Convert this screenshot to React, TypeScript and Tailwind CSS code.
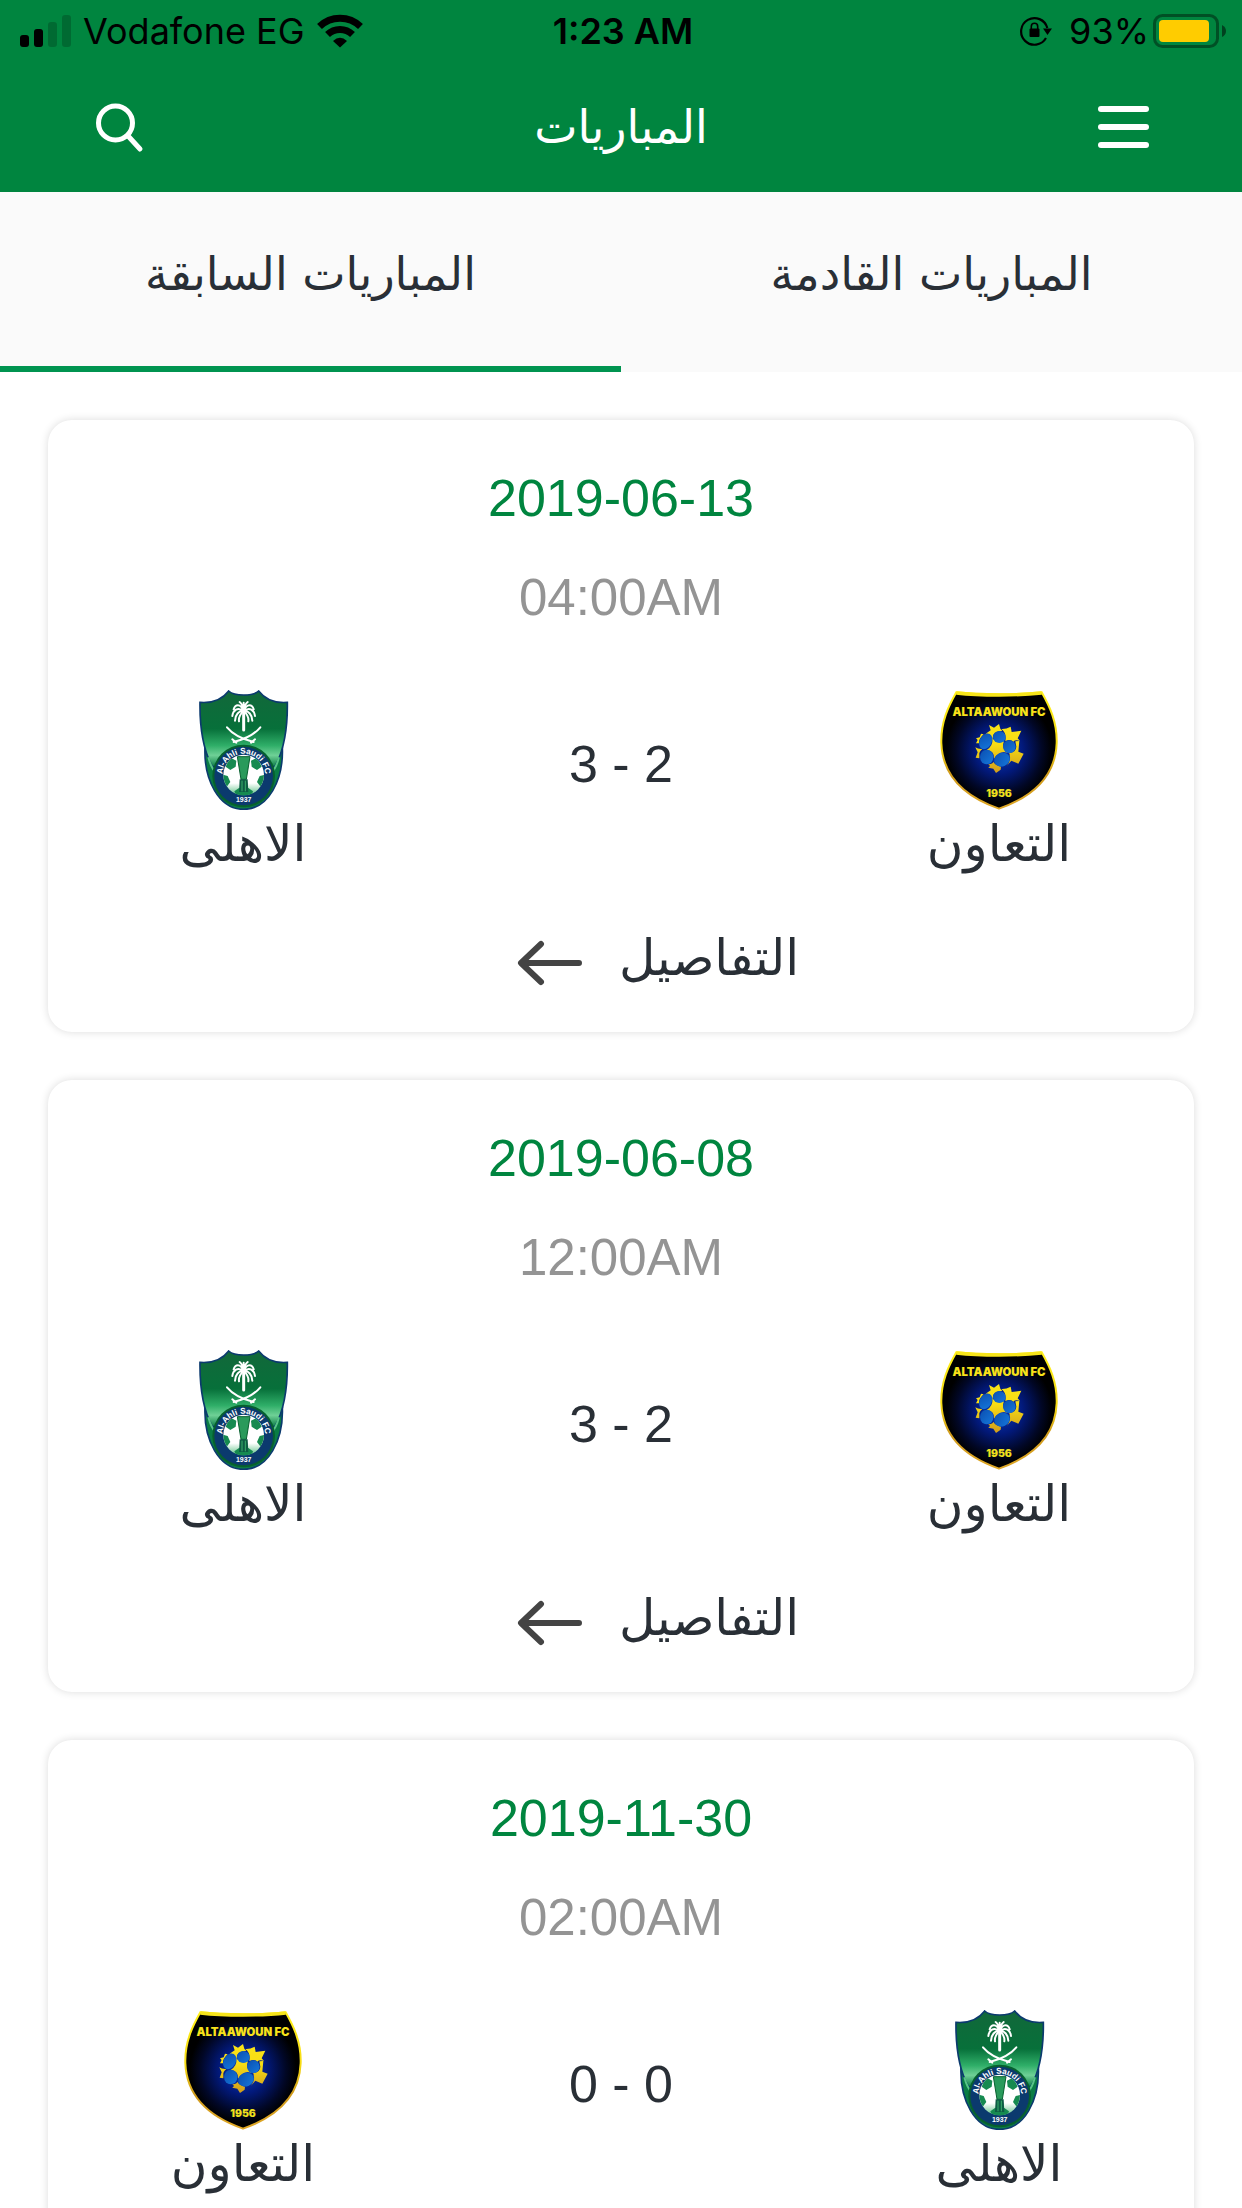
type Team = "ahli" | "taawoun";

type Match = {
  date: string;
  time: string;
  right: Team;
  left: Team;
  score: string;
};

const matches: Match[] = [
  { date: "2019-06-13", time: "04:00AM", right: "taawoun", left: "ahli", score: "3 - 2" },
  { date: "2019-06-08", time: "12:00AM", right: "taawoun", left: "ahli", score: "3 - 2" },
  { date: "2019-11-30", time: "02:00AM", right: "ahli", left: "taawoun", score: "0 - 0" },
];

const teamNames = {
  ahli: "الاهلى",
  taawoun: "التعاون",
};

const AhliLogo = () => (
  <svg viewBox="42 60 360 360" className="size-[120px]" direction="ltr" aria-hidden="true">
    <defs>
      <linearGradient id="ahliShield" x1="0" y1="0" x2="0" y2="1">
        <stop offset="0" stopColor="#12683a" />
        <stop offset="0.5" stopColor="#07703a" />
        <stop offset="0.72" stopColor="#2fae68" />
        <stop offset="0.85" stopColor="#6fd096" />
        <stop offset="1" stopColor="#0a7d45" />
      </linearGradient>
      <linearGradient id="ahliBall" x1="0" y1="0" x2="0" y2="1">
        <stop offset="0" stopColor="#ffffff" />
        <stop offset="0.7" stopColor="#ffffff" />
        <stop offset="1" stopColor="#5cc184" />
      </linearGradient>
      <clipPath id="ahliBallClip">
        <circle cx="224" cy="315" r="61" />
      </clipPath>
      <path id="ahliArc" d="M160 315 A64 64 0 0 1 288 315" />
    </defs>
    <path d="M108 232 C104 330 150 418 224 418 C298 418 344 330 340 232 Z" fill="#0a7d45" stroke="#0b3a6e" strokeWidth="5" />
    <path
      d="M179 63 C196 79 252 79 269 63 C288 88 318 100 355 97 C356 170 345 240 318 290 L130 290 C103 240 92 170 93 97 C130 100 160 88 179 63 Z"
      fill="url(#ahliShield)"
      stroke="#0b3a6e"
      strokeWidth="5"
    />
    <path d="M118 262 C124 285 132 300 142 310 M330 262 C324 285 316 300 306 310" fill="none" stroke="#57c586" strokeWidth="6" />
    {/* palm */}
    <g fill="none" stroke="#fff" strokeLinecap="round">
      <path d="M224 126 L224 180" strokeWidth="9" />
      <path
        d="M224 124 C214 98 198 104 194 118 M224 124 C206 108 192 122 190 138 M224 124 C210 120 198 136 198 152 M224 124 C216 128 208 142 210 154 M224 124 C234 98 250 104 254 118 M224 124 C242 108 256 122 258 138 M224 124 C238 120 250 136 250 152 M224 124 C232 128 240 142 238 154 M224 124 C222 110 218 100 212 96 M224 124 C226 110 230 100 236 96 M224 124 L224 98"
        strokeWidth="6"
      />
    </g>
    {/* crossed swords */}
    <g fill="none" stroke="#fff" strokeWidth="6" strokeLinecap="round">
      <path d="M174 172 C192 194 222 208 254 216 M274 172 C256 194 226 208 194 216" />
      <path d="M246 218 L258 208 M202 218 L190 208" />
    </g>
    <circle cx="224" cy="318" r="94" fill="#07602f" />
    <circle cx="224" cy="318" r="88" fill="#0b3a6e" />
    <circle cx="224" cy="315" r="61" fill="url(#ahliBall)" />
    <g clipPath="url(#ahliBallClip)" fill="#168a50">
      <path d="M182 262 L202 272 L200 290 L184 300 L170 290 Z" />
      <path d="M266 262 L246 272 L248 290 L264 300 L278 290 Z" />
      <path d="M160 314 L176 318 L184 336 L172 352 L158 344 Z" />
      <path d="M288 314 L272 318 L264 336 L276 352 L290 344 Z" />
      <path d="M196 364 L210 354 H238 L252 364 L246 380 H202 Z" />
      <path d="M205 260 L243 260 L232 328 L216 328 Z" fill="#2a9a5b" stroke="#07602f" strokeWidth="3" />
      <path d="M212 328 L236 328 L238 366 L210 366 Z" fill="#0d5c44" />
      <path d="M219 332 V364 M229 332 V364" stroke="#3aaf6c" strokeWidth="3" />
    </g>
    <text fontFamily="Liberation Sans, sans-serif" fontSize="25" fontWeight="700" fill="#fff" textAnchor="middle">
      <textPath href="#ahliArc" startOffset="50%">
        Al-Ahli Saudi FC
      </textPath>
    </text>
    <text x="224" y="396" fontFamily="Liberation Sans, sans-serif" fontSize="21" fontWeight="700" fill="#fff" textAnchor="middle">
      1937
    </text>
  </svg>
);

const TaawounLogo = () => (
  <svg viewBox="87 60 360 360" className="size-[120px]" direction="ltr" aria-hidden="true">
    <defs>
      <radialGradient id="taawounShield" gradientUnits="userSpaceOnUse" cx="267" cy="240" r="160">
        <stop offset="0" stopColor="#0a3fc0" />
        <stop offset="0.45" stopColor="#02197a" />
        <stop offset="0.8" stopColor="#010726" />
        <stop offset="1" stopColor="#000000" />
      </radialGradient>
      <linearGradient id="taawounGold" gradientUnits="userSpaceOnUse" x1="0" y1="64" x2="0" y2="418">
        <stop offset="0" stopColor="#fff01c" />
        <stop offset="0.45" stopColor="#f7dc14" />
        <stop offset="0.7" stopColor="#cf9a1c" />
        <stop offset="1" stopColor="#e0a827" />
      </linearGradient>
      <linearGradient id="taawounPanel" x1="0" y1="0" x2="1" y2="1">
        <stop offset="0" stopColor="#0b4fb0" />
        <stop offset="1" stopColor="#1578dc" />
      </linearGradient>
    </defs>
    <path
      d="M139 67 C210 75 324 75 395 67 C418 108 442 155 440 220 C436 318 370 380 267 416 C164 380 98 318 94 220 C92 155 116 108 139 67 Z"
      fill="url(#taawounShield)"
      stroke="url(#taawounGold)"
      strokeWidth="6"
    />
    <path d="M139 69 C210 77 324 77 395 69" fill="none" stroke="#f7e51a" strokeWidth="10" />
    {/* gold stars between the panels of the ball */}
    <g fill="url(#taawounGold)">
      <path d="M247 205 Q262 222 282 214 Q272 234 292 248 Q268 240 252 266 Q254 242 230 240 Q250 228 247 205 Z" />
      <path d="M237 165 L252 173 L267 162 L271 176 L277 183 Q258 182 250 194 L247 208 Q244 190 227 191 L242 181 Z" />
      <path d="M274 177 Q288 178 302 170 L305 186 L334 182 L323 205 L330 213 Q316 208 310 215 Q302 206 286 213 Q291 190 274 177 Z" />
      <path d="M316 214 L328 213 L325 245 L341 251 L325 281 L304 272 L290 288 Q304 270 299 257 Q300 252 297 249 Q318 248 319 230 Z" />
      <path d="M235 282 Q246 284 251 276 Q254 286 273 290 L272 299 L258 309 L250 296 L235 293 L240 288 Z" />
      <path d="M196 232 Q204 238 217 237 Q206 246 208 256 L208 265 L197 263 L203 247 Z" />
      <path d="M213 191 L221 193 Q206 206 207 220 L198 220 L203 210 L198 205 L209 202 Z" />
    </g>
    <g fill="url(#taawounPanel)">
      <ellipse cx="268" cy="201" rx="19" ry="18" />
      <ellipse cx="227" cy="214" rx="18" ry="25" transform="rotate(30 227 214)" />
      <ellipse cx="298" cy="230" rx="19" ry="19" />
      <ellipse cx="230" cy="261" rx="20" ry="22" />
      <ellipse cx="276" cy="269" rx="24" ry="20" transform="rotate(-25 276 269)" />
    </g>
    <text x="267" y="137" fontFamily="Inter, sans-serif" fontSize="34" fontWeight="900" fill="#f7e21a" textAnchor="middle">
      ALTAAWOUN FC
    </text>
    <text x="267" y="381" fontFamily="Inter, sans-serif" fontSize="31" fontWeight="900" fill="#f0e01c" textAnchor="middle">
      1956
    </text>
  </svg>
);

const TeamBadge = ({ team }: { team: Team }) => (
  <div className="flex flex-col items-center">
    {team === "ahli" ? <AhliLogo /> : <TaawounLogo />}
    <p className="text-[50px] leading-[68px]">{teamNames[team]}</p>
  </div>
);

const MatchCard = ({ match }: { match: Match }) => (
  <article className="rounded-3xl bg-white pt-12 pb-10 text-center shadow-[0_0_8px_rgba(0,0,0,0.14)]">
    <p className="font-['Liberation_Sans',sans-serif] text-[52px] leading-[60px] text-[#00853f]">{match.date}</p>
    <p className="mt-10 font-['Liberation_Sans',sans-serif] text-[51px] leading-[60px] text-[#949494]">{match.time}</p>
    <div className="mt-[62px] grid grid-cols-3 px-[6px]">
      <TeamBadge team={match.right} />
      <p dir="ltr" className="pt-11 font-['Liberation_Sans',sans-serif] text-[52px] leading-[60px]">
        {match.score}
      </p>
      <TeamBadge team={match.left} />
    </div>
    <div className="mt-[46px] flex justify-center pl-[74px]">
      <a href="#details" className="flex items-center gap-9">
        <span className="text-[50px] leading-[68px]">التفاصيل</span>
        <svg viewBox="0 0 66 56" className="h-[56px] w-[66px]" fill="none" stroke="#444" strokeWidth="6" strokeLinecap="round" strokeLinejoin="round" aria-hidden="true">
          <path d="M62 33 H5 M24 14 L4 33 L24 52" />
        </svg>
      </a>
    </div>
  </article>
);

const StatusBar = () => (
  <div dir="ltr" className="grid h-[62px] grid-cols-[1fr_auto_1fr] items-center pr-4 pl-5 font-['Inter',sans-serif] text-[36px] leading-[44px] text-black">
    <div className="flex items-center gap-3">
      <svg viewBox="0 0 51 32" className="h-8 w-[51px]" aria-hidden="true">
        <rect x="0" y="20" width="9" height="12" rx="3" />
        <rect x="14" y="14" width="9" height="18" rx="3" />
        <rect x="28" y="7" width="9" height="25" rx="3" fillOpacity="0.2" />
        <rect x="42" y="0" width="9" height="32" rx="3" fillOpacity="0.2" />
      </svg>
      <span>Vodafone EG</span>
      <svg viewBox="0 0 46 34" className="h-[34px] w-[46px]" fill="none" stroke="#000" aria-hidden="true">
        <path d="M2.5 12.5 A29.500 29.500 0 0 1 43.500 12.500" strokeWidth="7" />
        <path d="M10.500 20.500 A18 18 0 0 1 35.500 20.500" strokeWidth="7" />
        <path d="M23 33.500 L16 27 Q23 20.500 30 27 Z" fill="#000" stroke="none" />
      </svg>
    </div>
    <span className="font-semibold">1:23 AM</span>
    <div className="flex items-center justify-end gap-1">
      <svg viewBox="0 0 33 30" className="mr-3 h-[30px] w-[33px]" aria-hidden="true">
        <path d="M27.300 12 A13.300 13.300 0 1 0 26 22" fill="none" stroke="#000" strokeWidth="2.200" />
        <path d="M23 12.500 H32 L27.500 19 Z" />
        <rect x="9.500" y="12.500" width="10" height="8.500" rx="1" />
        <path d="M11.300 13 V10.500 A3.200 3.200 0 0 1 17.700 10.500 V13" fill="none" stroke="#000" strokeWidth="1.600" />
      </svg>
      <span>93%</span>
      <svg viewBox="0 0 74 34" className="-mr-px h-[34px] w-[74px]" aria-hidden="true">
        <rect x="1.500" y="1.500" width="63" height="31" rx="8" fill="none" stroke="#000" strokeOpacity="0.4" strokeWidth="3" />
        <rect x="6" y="6" width="50" height="22" rx="4" fill="#ffcc00" />
        <path d="M69 11 Q73 13 73 17 Q73 21 69 23 Z" fillOpacity="0.5" />
      </svg>
    </div>
  </div>
);

const Header = () => (
  <header className="bg-[#00853f] text-white">
    <StatusBar />
    <div className="flex h-[130px] items-center justify-between px-[93px]">
      <button type="button" aria-label="القائمة" className="flex flex-col gap-3">
        <span className="h-[6px] w-[51px] rounded-full bg-white" />
        <span className="h-[6px] w-[51px] rounded-full bg-white" />
        <span className="h-[6px] w-[51px] rounded-full bg-white" />
      </button>
      <h1 className="text-[46px] leading-[68px]">المباريات</h1>
      <button type="button" aria-label="بحث">
        <svg viewBox="0 0 51 51" className="size-[51px]" fill="none" stroke="currentColor" strokeWidth="5" strokeLinecap="round" aria-hidden="true">
          <circle cx="22.500" cy="21" r="17" />
          <path d="M36 35 L47 47" />
        </svg>
      </button>
    </div>
  </header>
);

const App = () => {
  return (
    <div dir="rtl" className="min-h-screen bg-white font-['DejaVu_Sans',sans-serif] text-[#292f36]">
      <Header />
      <nav className="grid grid-cols-2 bg-[#fafafa]">
        <button type="button" className="border-b-[6px] border-transparent pt-12 pb-[58px] text-[46px] leading-[68px]">
          المباريات القادمة
        </button>
        <button type="button" className="border-b-[6px] border-[#009450] pt-12 pb-[58px] text-[46px] leading-[68px]">
          المباريات السابقة
        </button>
      </nav>
      <main className="flex flex-col gap-12 p-12">
        {matches.map((match) => (
          <MatchCard key={match.date} match={match} />
        ))}
      </main>
    </div>
  );
};

export default App;
